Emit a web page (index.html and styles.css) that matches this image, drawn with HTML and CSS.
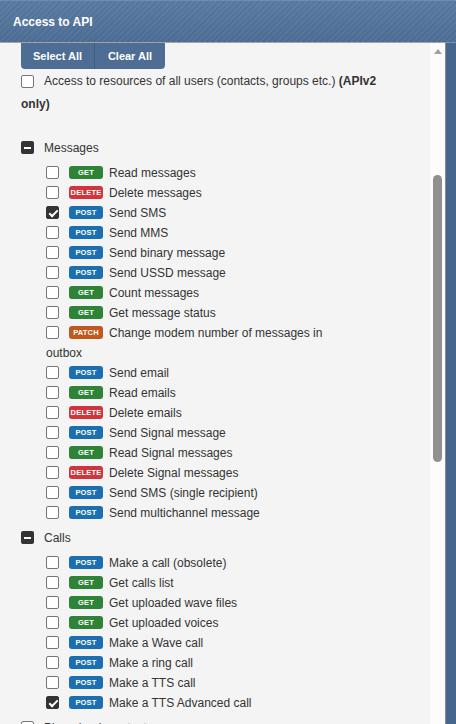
FILE: index.html
```html
<!DOCTYPE html>
<html>
<head>
<meta charset="utf-8">
<link rel="stylesheet" href="styles.css">
</head>
<body>
<div class="app">
  <header class="titlebar">Access to API</header>
  <div class="main">
    <div class="panel">
      <div class="content">
        <div class="btn-group">
          <button class="btn">Select All</button>
          <button class="btn">Clear All</button>
        </div>
        <div class="global-opt"><span class="cb"></span>Access to resources of all users (contacts, groups etc.) <b>(APIv2 only)</b></div>

        <div class="section">
          <div class="section-head"><span class="minus"></span>Messages</div>
          <div class="item"><span class="cb"></span><span class="badge get">GET</span>Read messages</div>
          <div class="item"><span class="cb"></span><span class="badge delete">DELETE</span>Delete messages</div>
          <div class="item"><span class="cb checked"></span><span class="badge post">POST</span>Send SMS</div>
          <div class="item"><span class="cb"></span><span class="badge post">POST</span>Send MMS</div>
          <div class="item"><span class="cb"></span><span class="badge post">POST</span>Send binary message</div>
          <div class="item"><span class="cb"></span><span class="badge post">POST</span>Send USSD message</div>
          <div class="item"><span class="cb"></span><span class="badge get">GET</span>Count messages</div>
          <div class="item"><span class="cb"></span><span class="badge get">GET</span>Get message status</div>
          <div class="item"><span class="cb"></span><span class="badge patch">PATCH</span>Change modem number of messages in outbox</div>
          <div class="item"><span class="cb"></span><span class="badge post">POST</span>Send email</div>
          <div class="item"><span class="cb"></span><span class="badge get">GET</span>Read emails</div>
          <div class="item"><span class="cb"></span><span class="badge delete">DELETE</span>Delete emails</div>
          <div class="item"><span class="cb"></span><span class="badge post">POST</span>Send Signal message</div>
          <div class="item"><span class="cb"></span><span class="badge get">GET</span>Read Signal messages</div>
          <div class="item"><span class="cb"></span><span class="badge delete">DELETE</span>Delete Signal messages</div>
          <div class="item"><span class="cb"></span><span class="badge post">POST</span>Send SMS (single recipient)</div>
          <div class="item"><span class="cb"></span><span class="badge post">POST</span>Send multichannel message</div>
        </div>

        <div class="section">
          <div class="section-head"><span class="minus"></span>Calls</div>
          <div class="item"><span class="cb"></span><span class="badge post">POST</span>Make a call (obsolete)</div>
          <div class="item"><span class="cb"></span><span class="badge get">GET</span>Get calls list</div>
          <div class="item"><span class="cb"></span><span class="badge get">GET</span>Get uploaded wave files</div>
          <div class="item"><span class="cb"></span><span class="badge get">GET</span>Get uploaded voices</div>
          <div class="item"><span class="cb"></span><span class="badge post">POST</span>Make a Wave call</div>
          <div class="item"><span class="cb"></span><span class="badge post">POST</span>Make a ring call</div>
          <div class="item"><span class="cb"></span><span class="badge post">POST</span>Make a TTS call</div>
          <div class="item"><span class="cb checked"></span><span class="badge post">POST</span>Make a TTS Advanced call</div>
        </div>

        <div class="section">
          <div class="section-head"><span class="cb"></span>Phonebook contacts</div>
        </div>
      </div>
      <div class="scrollbar">
        <span class="arrow-up"></span>
        <span class="thumb"></span>
      </div>
    </div>
    <div class="strip"></div>
  </div>
</div>
</body>
</html>
```

FILE: styles.css
```css
* { box-sizing: border-box; }
html, body { margin: 0; padding: 0; }
body {
  font-family: "Liberation Sans", Arial, sans-serif;
  color: #333;
  background: #f4f4f4;
}
.app {
  width: 456px;
  height: 724px;
  display: flex;
  flex-direction: column;
  overflow: hidden;
}
.titlebar {
  flex: 0 0 42px;
  display: flex;
  align-items: center;
  padding: 1px 0 0 13px;
  font-size: 12px;
  font-weight: bold;
  color: #fff;
  border-top: 1px solid #6e8bb0;
  background:
    repeating-linear-gradient(135deg, rgba(255,255,255,0.05) 0 2px, rgba(0,0,0,0) 2px 4px),
    linear-gradient(180deg, #56789f 0%, #4b6b92 100%);
}
.main {
  flex: 1;
  display: flex;
  min-height: 0;
}
.panel {
  flex: 0 0 446px;
  display: flex;
  border-top: 1px solid #a3a3a3;
  border-right: 1px solid #8c8c8c;
  background: #f4f4f4;
  overflow: hidden;
}
.strip {
  flex: 1;
  background: #46668d;
  border-top: 1px solid #7d95b4;
}
.content {
  flex: 1;
  padding-left: 21px;
  padding-right: 0;
  font-size: 12px;
  overflow: hidden;
}
.btn-group {
  display: flex;
  width: 144px;
  height: 26px;
  background: #4d6d94;
  border-radius: 0 0 4px 4px;
  overflow: hidden;
}
.btn {
  border: 0;
  background: transparent;
  color: #fff;
  font-family: "Liberation Sans", Arial, sans-serif;
  font-size: 11px;
  font-weight: bold;
  padding: 0;
  height: 26px;
}
.btn:first-child { width: 74px; border-right: 1px solid #3f5d82; }
.btn:last-child { flex: 1; }
.global-opt {
  line-height: 23px;
  padding-top: 1px;
  margin-bottom: 22px;
  padding-right: 35px;
}
.global-opt .cb { margin-top: 5px; }
.global-opt b { font-weight: bold; }
.cb {
  display: inline-block;
  width: 13px;
  height: 13px;
  border: 1px solid #767676;
  border-radius: 2px;
  background: #fff;
  vertical-align: top;
  margin-top: 3px;
  margin-right: 10px;
  position: relative;
}
.cb.checked {
  background: #333;
  border-color: #333;
}
.cb.checked::after {
  content: "";
  position: absolute;
  left: 3.5px;
  top: 0.5px;
  width: 3px;
  height: 7px;
  border: solid #fff;
  border-width: 0 2px 2px 0;
  transform: rotate(45deg);
}
.section { margin-bottom: 5px; }
.section-head {
  line-height: 20px;
  height: 20px;
  margin-top: 1px;
  margin-bottom: 5px;
  font-size: 12px;
}
.minus {
  display: inline-block;
  width: 13px;
  height: 13px;
  background: #333;
  border-radius: 2px;
  vertical-align: top;
  margin-top: 3px;
  margin-right: 10px;
  position: relative;
}
.minus::after {
  content: "";
  position: absolute;
  left: 3px;
  top: 5.5px;
  width: 7px;
  height: 2px;
  background: #fff;
}
.item {
  line-height: 20px;
  padding-left: 25px;
  padding-right: 80px;
}
.badge {
  display: inline-block;
  width: 34px;
  height: 13px;
  line-height: 13px;
  border-radius: 3px;
  color: #fff;
  font-size: 7.5px;
  font-weight: bold;
  text-align: center;
  vertical-align: top;
  margin-top: 3px;
  margin-right: 6px;
  letter-spacing: 0.2px;
}
.get { background: #2e8336; }
.delete { background: #d1343a; }
.post { background: #1b6fb1; }
.patch { background: #c1581d; }
.scrollbar {
  flex: 0 0 15px;
  background: #fcfcfc;
  display: flex;
  flex-direction: column;
  align-items: center;
  padding-top: 6px;
}
.arrow-up {
  width: 0;
  height: 0;
  border-left: 4.5px solid transparent;
  border-right: 4.5px solid transparent;
  border-bottom: 5px solid #a0a0a0;
}
.thumb {
  width: 9px;
  height: 287px;
  margin-top: 121px;
  background: #909090;
  border-radius: 4.5px;
}
```
